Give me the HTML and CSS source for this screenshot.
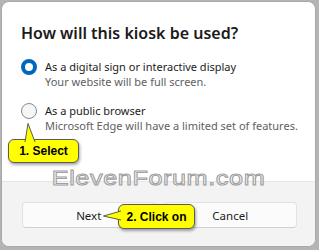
FILE: index.html
```html
<!DOCTYPE html>
<html>
<head>
<meta charset="utf-8">
<link rel="stylesheet" href="styles.css">
</head>
<body>
<div class="dialog">
  <div class="content">
    <h1 class="title">How will this kiosk be used?</h1>
    <div class="options">
      <div class="option">
        <span class="radio radio-on"></span>
        <div class="opt-text">
          <div class="opt-label">As a digital sign or interactive display</div>
          <div class="opt-desc">Your website will be full screen.</div>
        </div>
      </div>
      <div class="option">
        <span class="radio"></span>
        <div class="opt-text">
          <div class="opt-label">As a public browser</div>
          <div class="opt-desc">Microsoft Edge will have a limited set of features.</div>
        </div>
      </div>
    </div>
  </div>
  <div class="footer">
    <button class="btn">Next</button>
    <button class="btn">Cancel</button>
  </div>
  <div class="watermark">ElevenForum.com</div>
  <div class="callout callout-select">
    <svg class="tail tail-up" width="14" height="19" viewBox="0 0 14 19"><path d="M3,19 L6,0.5 L13,19" fill="#ffff00" stroke="#5a5a5a" stroke-width="1"/></svg>
    <span class="callout-text">1. Select</span>
  </div>
  <div class="callout callout-click">
    <svg class="tail tail-left" width="18" height="12" viewBox="0 0 18 12"><path d="M18,1 L0.5,6 L18,10" fill="#ffff00" stroke="#5a5a5a" stroke-width="1"/></svg>
    <span class="callout-text">2. Click on</span>
  </div>
</div>
</body>
</html>
```
FILE: styles.css
```css
html, body {
  margin: 0;
  padding: 0;
}
body {
  width: 319px;
  height: 250px;
  background: #b4b4b4;
  overflow: hidden;
  font-family: "Noto Sans", "Open Sans", sans-serif;
}
.dialog {
  position: relative;
  box-sizing: border-box;
  margin: 1px 0 0 1px;
  width: 315px;
  height: 246px;
  background: #ffffff;
  border: 1px solid #a8a8a8;
  border-radius: 8px;
  overflow: hidden;
  display: flex;
  flex-direction: column;
}
.content {
  flex: 1;
  padding: 21px 10px 0 19px;
}
.title {
  margin: 0;
  font-size: 16px;
  font-weight: 600;
  color: #1b1b1b;
  line-height: 21px;
}
.options {
  display: flex;
  flex-direction: column;
  gap: 13px;
  margin-top: 15px;
}
.option {
  display: flex;
  align-items: flex-start;
  gap: 8px;
}
.radio {
  box-sizing: border-box;
  flex: none;
  width: 16px;
  height: 16px;
  border-radius: 50%;
  border: 1px solid #8a8a8a;
  background: #f6f6f6;
}
.radio-on {
  border: 4px solid #0067c0;
  background: #ffffff;
}
.opt-label {
  font-size: 11px;
  line-height: 15px;
  color: #1b1b1b;
  white-space: nowrap;
}
.opt-desc {
  font-size: 11px;
  line-height: 16px;
  color: #606060;
  white-space: nowrap;
}
.footer {
  flex: none;
  height: 65px;
  box-sizing: border-box;
  background: #f3f3f3;
  border-top: 1px solid #e6e6e6;
  display: flex;
  gap: 8px;
  padding: 20px 18px 0 20px;
}
.btn {
  flex: 1;
  height: 26px;
  box-sizing: border-box;
  background: #fbfbfb;
  border: 1px solid #e2e2e2;
  border-bottom-color: #d0d0d0;
  border-radius: 4px;
  font-family: inherit;
  font-size: 11.5px;
  color: #1b1b1b;
  padding: 0;
}
.watermark {
  position: absolute;
  left: 0;
  right: 0;
  top: 164px;
  text-align: center;
  font-family: "Liberation Sans", sans-serif;
  font-size: 21px;
  letter-spacing: 0.5px;
  color: #ffffff;
  -webkit-text-stroke: 1px #a0a0a0;
  transform: scaleX(1.2);
}
.callout {
  position: absolute;
  box-sizing: border-box;
  background: #ffff00;
  border: 1px solid #5a5a5a;
  border-radius: 6px;
  font-family: "Liberation Sans", sans-serif;
  font-weight: 700;
  font-size: 12px;
  color: #000;
  display: flex;
  align-items: center;
  justify-content: center;
  box-shadow: 1px 2px 3px rgba(0,0,0,0.35);
}
.callout-text {
  position: relative;
}
.callout-select {
  left: 6px;
  top: 137px;
  width: 71px;
  height: 24px;
}
.callout-click {
  left: 116px;
  top: 202px;
  width: 77px;
  height: 25px;
}
.tail {
  position: absolute;
  display: block;
}
.tail-up {
  left: 13px;
  top: -17px;
}
.tail-left {
  left: -16px;
  top: 5px;
}
```
